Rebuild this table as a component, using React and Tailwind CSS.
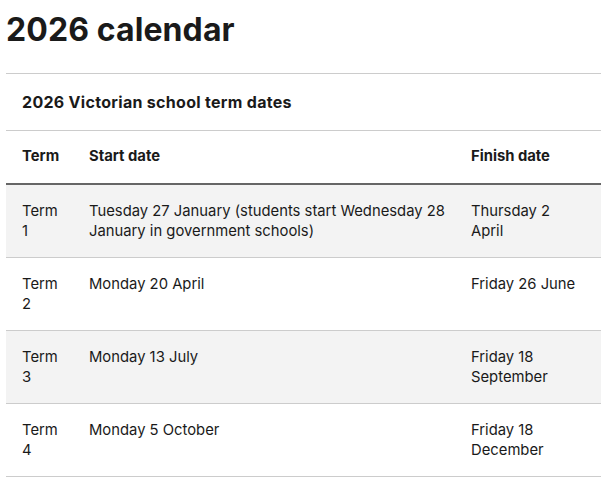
import React from 'react';

const terms = [
    { term: 'Term 1', start: 'Tuesday 27 January (students start Wednesday 28 January in government schools)', finish: 'Thursday 2 April' },
    { term: 'Term 2', start: 'Monday 20 April', finish: 'Friday 26 June' },
    { term: 'Term 3', start: 'Monday 13 July', finish: 'Friday 18 September' },
    { term: 'Term 4', start: 'Monday 5 October', finish: 'Friday 18 December' },
];

const App = () => {
    return (
        <div className="bg-white text-[#1a1a1a] px-[6px] pt-[10px] pr-[3px]" style={{ fontFamily: 'Inter, "Liberation Sans", sans-serif' }}>
            <h1 className="text-[32px] font-bold leading-[40px] tracking-[0.1px]">2026 calendar</h1>

            <table className="mt-[23px] w-full table-fixed border-collapse text-[14.8px] leading-[20px]">
                <caption className="text-left font-bold text-[16px] tracking-[0.3px] border-t border-[#cccccc] px-4 pt-[18px] pb-[18px]">
                    2026 Victorian school term dates
                </caption>
                <colgroup>
                    <col className="w-[67px]" />
                    <col />
                    <col className="w-[146px]" />
                </colgroup>
                <thead>
                    <tr className="border-t border-[#cccccc] border-b-2 border-b-[#666666]">
                        <th className="text-left font-bold px-4 pt-[15px] pb-[17px]">Term</th>
                        <th className="text-left font-bold pl-4 pr-2 pt-[15px] pb-[17px]">Start date</th>
                        <th className="text-left font-bold px-4 pt-[15px] pb-[17px]">Finish date</th>
                    </tr>
                </thead>
                <tbody>
                    {terms.map((t, i) => (
                        <tr key={t.term} className={i % 2 === 0 ? 'bg-[#f3f3f3] border-b border-[#cccccc]' : 'bg-white border-b border-[#cccccc]'}>
                            <td className="align-top px-4 py-4">{t.term}</td>
                            <td className="align-top pl-4 pr-2 py-4">{t.start}</td>
                            <td className="align-top px-4 py-4">{t.finish}</td>
                        </tr>
                    ))}
                </tbody>
            </table>
        </div>
    );
};

export default App;
